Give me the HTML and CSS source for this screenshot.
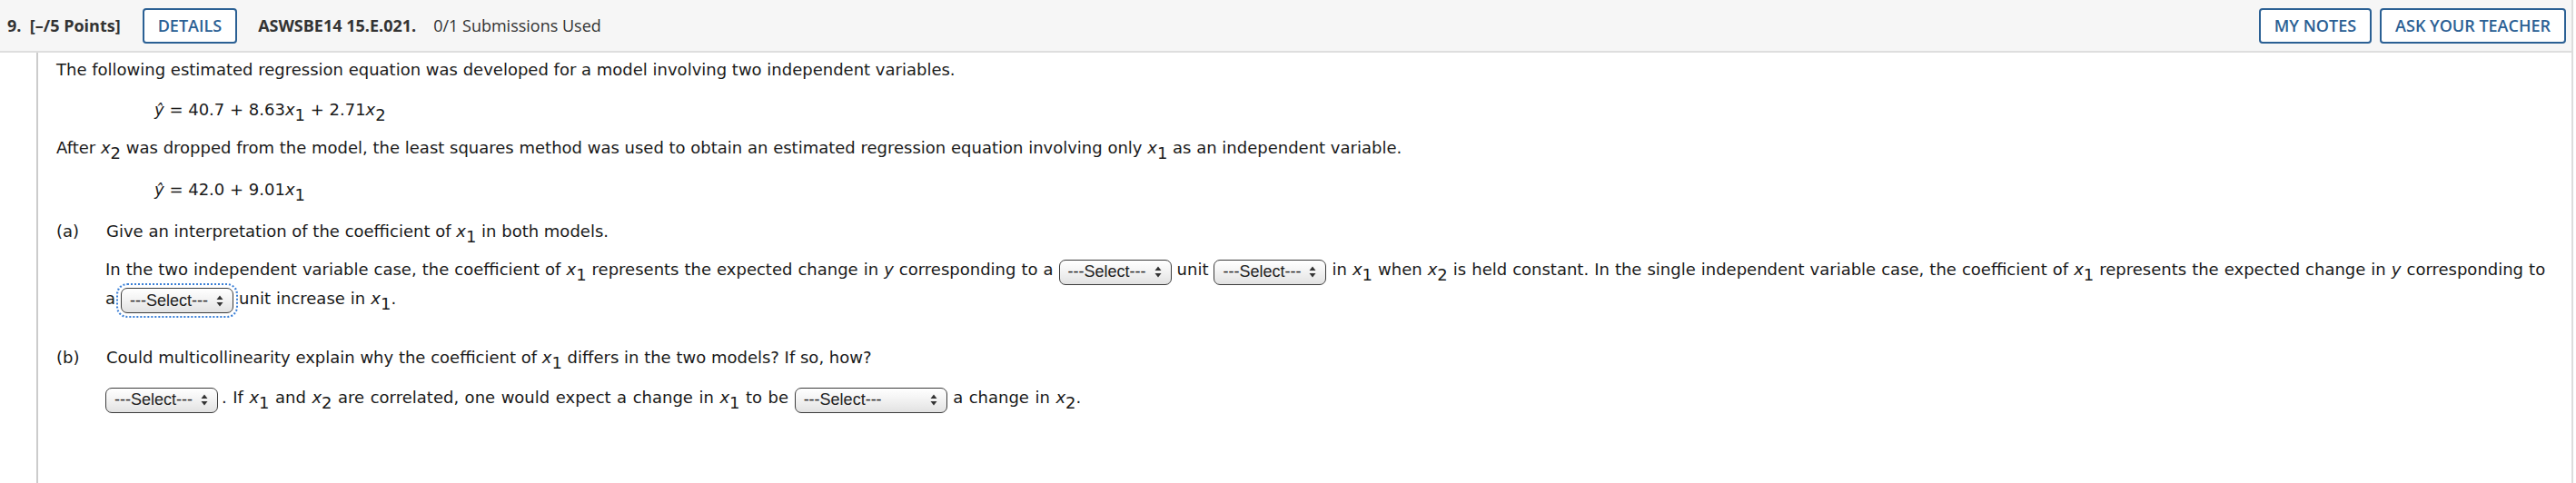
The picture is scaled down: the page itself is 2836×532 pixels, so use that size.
FILE: index.html
```html
<!DOCTYPE html>
<html lang="en">
<head>
<meta charset="utf-8">
<title>Question 9</title>
<link rel="stylesheet" href="styles.css">
</head>
<body>
<div class="question">
  <header class="qhead">
    <div class="qhead-left">
      <span class="qnum">9.&nbsp; [–/5 Points]</span>
      <button class="btn btn-details">DETAILS</button>
      <span class="qid">ASWSBE14 15.E.021.</span>
      <span class="qsub">0/1 Submissions Used</span>
    </div>
    <div class="qhead-right">
      <button class="btn">MY NOTES</button>
      <button class="btn">ASK YOUR TEACHER</button>
    </div>
  </header>
  <div class="qbody">
    <p class="txt p-intro">The following estimated regression equation was developed for a model involving two independent variables.</p>
    <p class="txt eq eq-1"><i>ŷ</i> = 40.7 + 8.63<i>x</i><span class="sb">1</span> + 2.71<i>x</i><span class="sb">2</span></p>
    <p class="txt p-after">After <i>x</i><span class="sb">2</span> was dropped from the model, the least squares method was used to obtain an estimated regression equation involving only <i>x</i><span class="sb">1</span> as an independent variable.</p>
    <p class="txt eq eq-2"><i>ŷ</i> = 42.0 + 9.01<i>x</i><span class="sb">1</span></p>

    <div class="part part-a">
      <span class="plabel">(a)</span>
      <span class="ptext">Give an interpretation of the coefficient of <i>x</i><span class="sb">1</span> in both models.</span>
    </div>
    <p class="txt ans ans-a">In the two independent variable case, the coefficient of <i>x</i><span class="sb">1</span> represents the expected change in <i>y</i> corresponding to a <span class="sel"><span class="sel-t">---Select---</span><svg class="arr" width="8" height="13" viewBox="0 0 8 13"><path d="M4 0.5 L7.5 5 L0.5 5 Z M4 12.5 L7.5 8 L0.5 8 Z" fill="#333"/></svg></span> unit <span class="sel"><span class="sel-t">---Select---</span><svg class="arr" width="8" height="13" viewBox="0 0 8 13"><path d="M4 0.5 L7.5 5 L0.5 5 Z M4 12.5 L7.5 8 L0.5 8 Z" fill="#333"/></svg></span> in <i>x</i><span class="sb">1</span> when <i>x</i><span class="sb">2</span> is held constant. In the single independent variable case, the coefficient of <i>x</i><span class="sb">1</span> represents the expected change in <i>y</i> corresponding to<br>a <span class="sel focus"><span class="sel-t">---Select---</span><svg class="arr" width="8" height="13" viewBox="0 0 8 13"><path d="M4 0.5 L7.5 5 L0.5 5 Z M4 12.5 L7.5 8 L0.5 8 Z" fill="#333"/></svg></span> unit increase in <i>x</i><span class="sb">1</span>.</p>

    <div class="part part-b">
      <span class="plabel">(b)</span>
      <span class="ptext">Could multicollinearity explain why the coefficient of <i>x</i><span class="sb">1</span> differs in the two models? If so, how?</span>
    </div>
    <p class="txt ans ans-b"><span class="sel sel-first"><span class="sel-t">---Select---</span><svg class="arr" width="8" height="13" viewBox="0 0 8 13"><path d="M4 0.5 L7.5 5 L0.5 5 Z M4 12.5 L7.5 8 L0.5 8 Z" fill="#333"/></svg></span>. If <i>x</i><span class="sb">1</span> and <i>x</i><span class="sb">2</span> are correlated, one would expect a change in <i>x</i><span class="sb">1</span> to be <span class="sel sel-wide"><span class="sel-t">---Select---</span><svg class="arr" width="8" height="13" viewBox="0 0 8 13"><path d="M4 0.5 L7.5 5 L0.5 5 Z M4 12.5 L7.5 8 L0.5 8 Z" fill="#333"/></svg></span> a change in <i>x</i><span class="sb">2</span>.</p>
  </div>
</div>
</body>
</html>
```

FILE: styles.css
```css
* { box-sizing: border-box; }

html, body {
  margin: 0;
  padding: 0;
  background: #fff;
}

.question {
  width: 2833px;
  border-right: 2px solid #dcdcdc;
  min-height: 532px;
  display: flex;
  flex-direction: column;
}

/* ---------- header ---------- */
.qhead {
  height: 58px;
  background: #f6f6f6;
  border-bottom: 2px solid #dedede;
  display: flex;
  align-items: center;
  justify-content: space-between;
  padding: 0 6px 0 8px;
  font-family: "Open Sans", "Liberation Sans", sans-serif;
  font-size: 18px;
  color: #333;
}

.qhead-left,
.qhead-right {
  display: flex;
  align-items: center;
}

.qhead-right {
  gap: 9px;
}

.qnum {
  font-weight: 700;
  white-space: pre;
  margin-right: 24px;
}

.btn {
  font-family: "Open Sans", "Liberation Sans", sans-serif;
  font-size: 18px;
  font-weight: 600;
  color: #2b6094;
  background: #fff;
  border: 2px solid #2b6094;
  border-radius: 4px;
  height: 39px;
  padding: 0 15px;
  line-height: 35px;
  letter-spacing: 0;
}

.btn-details {
  margin-right: 23px;
}

.qid {
  font-weight: 700;
  margin-right: 19px;
}

.qsub {
  font-weight: 400;
}

/* ---------- body ---------- */
.qbody {
  flex: 1;
  margin-left: 40px;
  border-left: 2px solid #cccccc;
  padding: 8px 0 0 20px;
  font-family: Verdana, "DejaVu Sans", sans-serif;
  font-size: 18px;
  color: #1a1a1a;
}

.txt {
  margin: 0;
  line-height: 22px;
}

.sb {
  vertical-align: -6px;
  line-height: 0;
}

.eq {
  padding-left: 108px;
}

.eq-1 { margin-top: 22px; }
.p-after { margin-top: 20px; }
.eq-2 { margin-top: 24px; }

.part {
  display: grid;
  grid-template-columns: 55px auto;
  line-height: 22px;
}

.part-a { margin-top: 24px; }

.ans {
  padding-left: 54px;
  line-height: 30px;
  word-spacing: 0.3px;
}

.ans-a {
  margin-top: 16px;
  white-space: nowrap;
}
.part-b { margin-top: 38px; }
.ans-b {
  margin-top: 18px;
  word-spacing: 0.8px;
}

/* ---------- select look-alike ---------- */
.sel {
  display: inline-flex;
  align-items: center;
  justify-content: space-between;
  width: 124px;
  height: 28px;
  padding: 0 10px 0 9px;
  border: 1.5px solid #3c3c3c;
  border-radius: 7px;
  background: linear-gradient(#ffffff, #f3f3f3 45%, #e2e2e2);
  font-family: "Liberation Sans", Arial, sans-serif;
  font-size: 18px;
  line-height: 21px;
  color: #222;
  vertical-align: -2px;
  word-spacing: 0;
}

.sel-first {
  margin-right: 4px;
}

.sel-wide {
  width: 168px;
}

.sel.focus {
  outline: 2px dotted #3a7fd6;
  outline-offset: 3px;
}

.arr {
  display: block;
  flex: none;
}
```
